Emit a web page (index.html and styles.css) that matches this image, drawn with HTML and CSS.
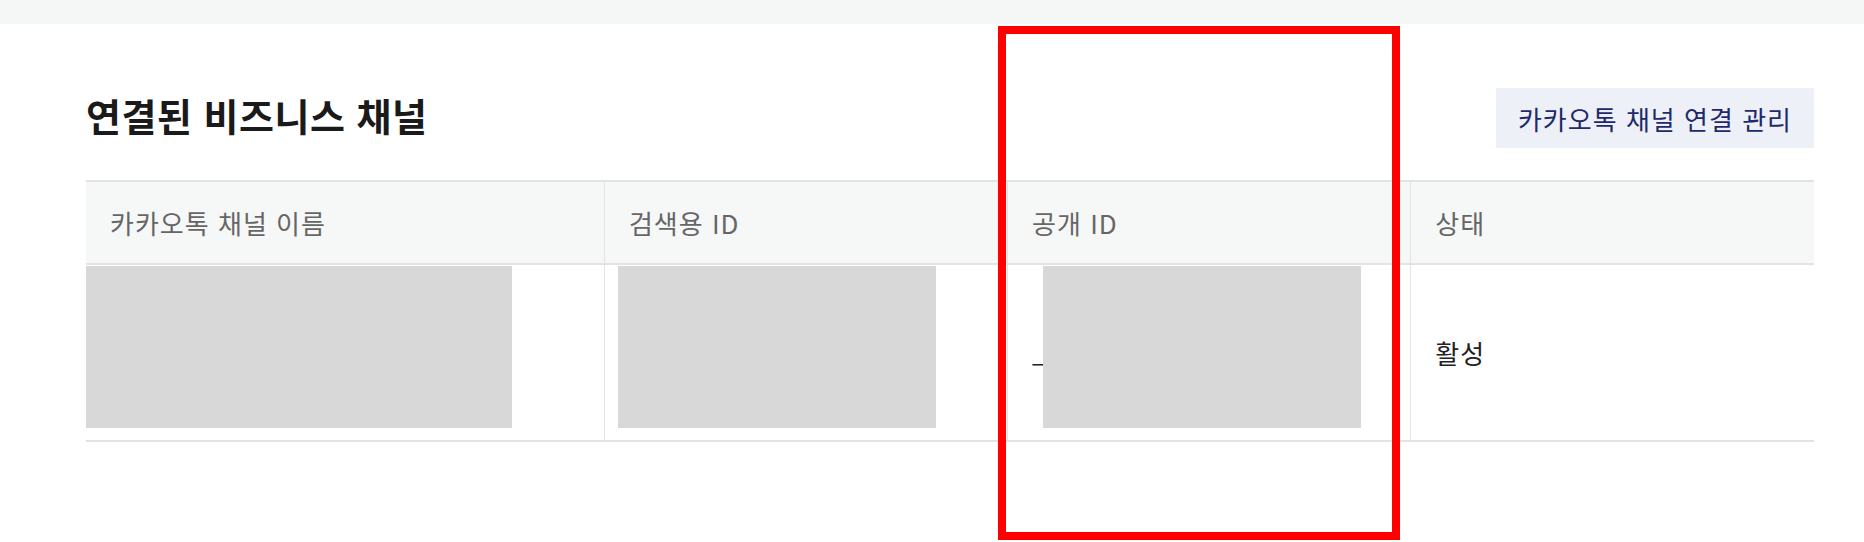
FILE: index.html
```html
<!DOCTYPE html>
<html lang="ko">
<head>
  <meta charset="UTF-8">
  <meta name="viewport" content="width=device-width, initial-scale=1.0">
  <title>연결된 비즈니스 채널</title>
  <link rel="stylesheet" href="styles.css">
</head>
<body>
  <div class="topbar"></div>

  <main class="content">
    <div class="section-head">
      <h2 class="section-title">연결된 비즈니스 채널</h2>
      <button class="btn-manage">카카오톡 채널 연결 관리</button>
    </div>

    <table class="channel-table">
      <colgroup>
        <col class="col-name">
        <col>
        <col>
        <col>
      </colgroup>
      <thead>
        <tr>
          <th>카카오톡 채널 이름</th>
          <th>검색용 ID</th>
          <th>공개 ID</th>
          <th>상태</th>
        </tr>
      </thead>
      <tbody>
        <tr>
          <td><span class="mask mask-name"></span></td>
          <td><span class="mask mask-search"></span></td>
          <td><span class="id-prefix">_</span><span class="mask mask-public"></span></td>
          <td class="status">활성</td>
        </tr>
      </tbody>
    </table>
  </main>

  <!-- 강조 표시 -->
  <div class="highlight"></div>
</body>
</html>
```

FILE: styles.css
```css
body {
  margin: 0;
  font-family: "Noto Sans CJK KR", "Noto Sans", sans-serif;
  background-color: #ffffff;
  color: #222222;
}

.topbar {
  height: 24px;
  background-color: #f5f6f6;
}

.content {
  padding: 64px 50px 0 86px;
}

.section-head {
  display: flex;
  justify-content: space-between;
  align-items: center;
  height: 60px;
}

.section-title {
  margin: 0 0 6px;
  font-size: 38px;
  font-weight: 700;
  line-height: 1;
  letter-spacing: 0.5px;
  color: #1a1a1a;
}

.btn-manage {
  height: 60px;
  padding: 0 22px;
  border: none;
  background-color: #eef0f8;
  color: #1d2a6b;
  font-family: inherit;
  font-size: 26px;
  letter-spacing: 1px;
  cursor: pointer;
}

.channel-table {
  width: 100%;
  margin-top: 32px;
  border-collapse: collapse;
  table-layout: fixed;
  border-top: 2px solid #e3e3e3;
  font-size: 26px;
  letter-spacing: 1px;
}

.col-name {
  width: 30%;
}

.channel-table th {
  height: 81px;
  padding: 0 24px;
  background-color: #f6f7f7;
  border-bottom: 2px solid #e3e3e3;
  text-align: left;
  font-weight: 400;
  color: #666666;
}

.channel-table td {
  position: relative;
  height: 175px;
  padding: 0 24px;
  border-bottom: 2px solid #e3e3e3;
  color: #222222;
}

.channel-table th + th,
.channel-table td + td {
  border-left: 1px solid #e3e3e3;
}

.id-prefix {
  vertical-align: 4px;
}

/* 가림 처리 */
.mask {
  position: absolute;
  top: 1px;
  height: 162px;
  background-color: #d8d8d8;
}

.mask-name {
  left: 0;
  width: 426px;
}

.mask-search {
  left: 13px;
  width: 318px;
}

.mask-public {
  left: 35px;
  width: 318px;
}

.highlight {
  position: absolute;
  left: 998px;
  top: 26px;
  width: 402px;
  height: 514px;
  box-sizing: border-box;
  border: 8px solid #ff0000;
  pointer-events: none;
}
```
